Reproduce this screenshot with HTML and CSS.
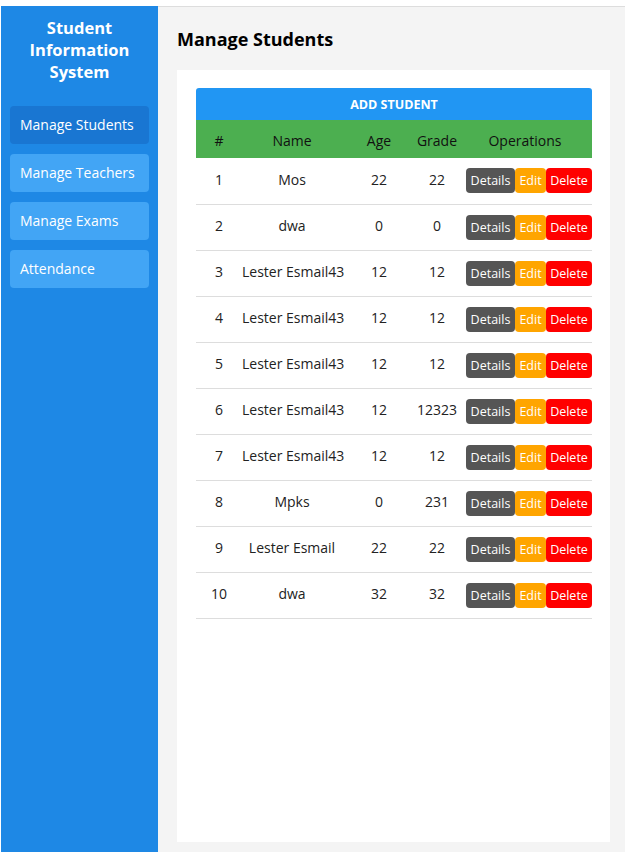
FILE: index.html
```html
<!DOCTYPE html>
<html>
<head>
<meta charset="utf-8">
<link rel="stylesheet" href="styles.css">
</head>
<body>
<div class="app">
  <aside class="sidebar">
    <h2 class="brand">Student Information System</h2>
    <nav class="nav">
      <a class="nav-item active">Manage Students</a>
      <a class="nav-item">Manage Teachers</a>
      <a class="nav-item">Manage Exams</a>
      <a class="nav-item">Attendance</a>
    </nav>
  </aside>
  <main class="main">
    <h1 class="page-title">Manage Students</h1>
    <section class="card">
      <button class="add-btn">ADD STUDENT</button>
      <table class="students">
        <thead>
          <tr><th class="c-num">#</th><th class="c-name">Name</th><th class="c-age">Age</th><th class="c-grade">Grade</th><th class="c-ops">Operations</th></tr>
        </thead>
        <tbody>
          <tr><td>1</td><td>Mos</td><td>22</td><td>22</td><td class="ops"><span class="btn details">Details</span><span class="btn edit">Edit</span><span class="btn delete">Delete</span></td></tr>
          <tr><td>2</td><td>dwa</td><td>0</td><td>0</td><td class="ops"><span class="btn details">Details</span><span class="btn edit">Edit</span><span class="btn delete">Delete</span></td></tr>
          <tr><td>3</td><td>Lester Esmail43</td><td>12</td><td>12</td><td class="ops"><span class="btn details">Details</span><span class="btn edit">Edit</span><span class="btn delete">Delete</span></td></tr>
          <tr><td>4</td><td>Lester Esmail43</td><td>12</td><td>12</td><td class="ops"><span class="btn details">Details</span><span class="btn edit">Edit</span><span class="btn delete">Delete</span></td></tr>
          <tr><td>5</td><td>Lester Esmail43</td><td>12</td><td>12</td><td class="ops"><span class="btn details">Details</span><span class="btn edit">Edit</span><span class="btn delete">Delete</span></td></tr>
          <tr><td>6</td><td>Lester Esmail43</td><td>12</td><td>12323</td><td class="ops"><span class="btn details">Details</span><span class="btn edit">Edit</span><span class="btn delete">Delete</span></td></tr>
          <tr><td>7</td><td>Lester Esmail43</td><td>12</td><td>12</td><td class="ops"><span class="btn details">Details</span><span class="btn edit">Edit</span><span class="btn delete">Delete</span></td></tr>
          <tr><td>8</td><td>Mpks</td><td>0</td><td>231</td><td class="ops"><span class="btn details">Details</span><span class="btn edit">Edit</span><span class="btn delete">Delete</span></td></tr>
          <tr><td>9</td><td>Lester Esmail</td><td>22</td><td>22</td><td class="ops"><span class="btn details">Details</span><span class="btn edit">Edit</span><span class="btn delete">Delete</span></td></tr>
          <tr><td>10</td><td>dwa</td><td>32</td><td>32</td><td class="ops"><span class="btn details">Details</span><span class="btn edit">Edit</span><span class="btn delete">Delete</span></td></tr>
        </tbody>
      </table>
    </section>
  </main>
</div>
</body>
</html>
```
FILE: styles.css
```css
* { box-sizing: border-box; }
html, body { margin: 0; padding: 0; background: #fff; }
body {
  font-family: "Open Sans", "Noto Sans", sans-serif;
  color: #111;
  padding: 6px 0 0 1px;
}
.app {
  display: flex;
  height: 846px;
  border-top: 1px solid #ddd;
}
.sidebar {
  width: 157px;
  flex: none;
  background: #1e88e5;
  padding: 11px 9px 0 9px;
  margin-top: -1px;
}
.brand {
  margin: 0;
  color: #fff;
  font-size: 16.5px;
  font-weight: 700;
  line-height: 22px;
  text-align: center;
  padding: 0 6px;
}
.nav {
  display: flex;
  flex-direction: column;
  gap: 10px;
  margin-top: 23px;
}
.nav-item {
  display: block;
  height: 38px;
  line-height: 38px;
  padding: 0 10px;
  border-radius: 4px;
  background: #42a5f5;
  color: #fff;
  font-size: 14px;
  white-space: nowrap;
}
.nav-item.active { background: #1976d2; }
.main {
  flex: 1;
  background: #f4f4f4;
  padding: 0 15px 0 19px;
}
.page-title {
  margin: 20px 0 0 0;
  font-size: 18px;
  font-weight: 700;
  line-height: 24px;
  color: #000;
}
.card {
  background: #fff;
  margin-top: 19px;
  height: 772px;
  padding: 18px 18px 0 19px;
}
.add-btn {
  display: block;
  width: 100%;
  height: 32px;
  border: 0;
  border-radius: 3px 3px 0 0;
  background: #2196f3;
  color: #fff;
  font-family: inherit;
  font-weight: 700;
  font-size: 12.5px;
  padding: 0;
}
.students {
  width: 100%;
  border-collapse: collapse;
  font-size: 14px;
  table-layout: fixed;
}
.students th {
  background: #4caf50;
  height: 38px;
  font-weight: 400;
  color: #111;
  padding: 2px 0 0 0;
}
.students td {
  height: 46px;
  text-align: center;
  padding: 0 0 3px 0;
  border-bottom: 1px solid #ddd;
  color: #222;
  white-space: nowrap;
}
.c-num { width: 46px; }
.c-name { width: 100px; }
.c-age { width: 74px; }
.c-grade { width: 42px; }
.c-ops { width: 134px; }
.students td.ops {
  font-size: 0;
  text-align: right;
  padding: 0;
}
.btn {
  display: inline-block;
  height: 25px;
  line-height: 25px;
  font-size: 12.5px;
  color: #fff;
  border-radius: 4px;
  vertical-align: middle;
  text-align: center;
}
.btn.details { background: #555; width: 49px; }
.btn.edit { background: #ffa500; width: 31px; }
.btn.delete { background: #f00; width: 46px; }
```
